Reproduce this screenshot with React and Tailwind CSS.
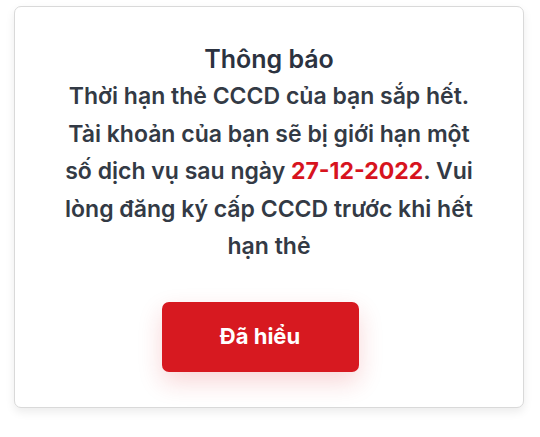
export default function App() {
  return (
    <div className="w-[540px] h-[437px] bg-white pt-[6px] pl-[14px]" style={{ fontFamily: "Inter, 'Noto Sans', sans-serif" }}>
      <div className="w-[510px] h-[402px] rounded-[7px] border border-[#d9d9d9] bg-white shadow-[0_4px_10px_rgba(0,0,0,0.08)] flex flex-col items-center pt-[35px]">
        <h1 className="text-[25px] leading-[34px] font-semibold text-[#2b3240]">Thông báo</h1>
        <p className="mt-[2px] text-center text-[23px] leading-[37.5px] font-semibold text-[#333a45] whitespace-nowrap">
          Thời hạn thẻ CCCD của bạn sắp hết.<br />
          Tài khoản của bạn sẽ bị giới hạn một<br />
          số dịch vụ sau ngày <span className="text-[#d7141e] font-bold">27-12-2022</span>. Vui<br />
          lòng đăng ký cấp CCCD trước khi hết<br />
          hạn thẻ
        </p>
        <button className="mt-[36px] mr-[18px] w-[197px] h-[70px] rounded-[7px] bg-[#d71920] text-white text-[22px] font-bold shadow-[0_10px_24px_rgba(215,25,32,0.18)]">
          Đã hiểu
        </button>
      </div>
    </div>
  );
}
